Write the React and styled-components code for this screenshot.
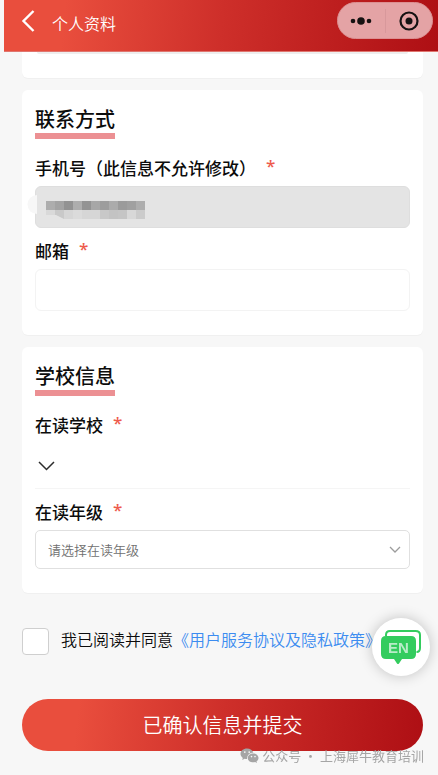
import React, { useState } from 'react'
import styled, { createGlobalStyle, css } from 'styled-components'

const GlobalStyle = createGlobalStyle`
  * {
    box-sizing: border-box;
  }
  body {
    margin: 0;
    background-color: #f7f7f7;
    color: #0c0c0c;
    font-family: "Noto Sans CJK SC", "Noto Sans", sans-serif;
  }
  button, input, select {
    font-family: inherit;
  }
`
const redGradient = css`
  background: linear-gradient(96deg, #e94e3d 14%, #ce2f2a 50%, #ae0f14 100%);
`
const Page = styled.div`
  position: relative;
  display: flex;
  flex-direction: column;
  min-height: 100vh;
`
const Header = styled.header`
  display: flex;
  align-items: flex-start;
  height: 52px;
  margin-left: 4px;
  padding: 2px 5px 0 17px;
  border-bottom: 1px solid #e0766f;
  color: white;
  ${redGradient}
`
const BackButton = styled.button`
  display: flex;
  padding: 8px 0 0;
  border: none;
  background: none;
  color: white;
  cursor: pointer;
`
const PageTitle = styled.h1`
  flex: 1;
  margin: 0 0 0 15px;
  padding-top: 9px;
  font-size: 16px;
  line-height: 24px;
  font-weight: 350;
`
const Capsule = styled.div`
  display: flex;
  align-items: center;
  width: 96px;
  height: 37px;
  border: 1px solid #dc8f91;
  border-radius: 19px;
  background-color: #e4a3a5;
`
const CapsuleButton = styled.button`
  display: flex;
  flex: 1;
  align-items: center;
  justify-content: center;
  height: 24px;
  padding: 0;
  border: none;
  background: none;
  color: #161212;
  cursor: pointer;
  & + & {
    border-left: 1px solid #d8989b;
  }
`
const Form = styled.form`
  display: flex;
  flex-direction: column;
  gap: 12px;
  padding: 0 15px 24px 22px;
`
const Card = styled.section`
  padding: 15px 13px 24px;
  border-radius: 6px;
  background-color: white;
  box-shadow: 0 1px 1px rgba(0, 0, 0, .03);
  ${props => props.$cut && css`
    padding: 0 15px 24px;
    border-radius: 0 0 6px 6px;
  `}
`
const FieldEnd = styled.div`
  height: 2px;
  border-radius: 0 0 2px 2px;
  background-color: #eeeeee;
`
const CardTitle = styled.h2`
  width: fit-content;
  margin: 0 0 17px;
  border-bottom: 6px solid #ec9093;
  font-size: 20px;
  line-height: 28px;
  font-weight: 500;
`
const Field = styled.div`
  display: flex;
  flex-direction: column;
  gap: 6px;
  & + & {
    margin-top: 11px;
  }
`
const Label = styled.label`
  display: flex;
  align-items: flex-start;
  font-size: 17px;
  line-height: 24px;
  font-weight: 500;
`
const Required = styled.span`
  margin-left: 10px;
  color: #ee5a4c;
  font-family: "Noto Sans", sans-serif;
  line-height: 20px;
`
const InputBox = styled.div`
  position: relative;
  display: flex;
`
const Input = styled.input`
  width: 100%;
  height: 42px;
  padding: 0 12px;
  border: 1px solid #f3f3f3;
  border-radius: 6px;
  background-color: white;
  font-size: 16px;
  &:disabled {
    border-color: #dedede;
    background-color: #e4e4e4;
  }
`
const Mask = styled.svg`
  position: absolute;
  top: 8px;
  left: -8px;
`
const SchoolPicker = styled.button`
  display: flex;
  align-items: center;
  height: 46px;
  padding: 0 3px;
  border: none;
  border-bottom: 1px solid #f5f5f5;
  background: none;
  color: #2c2c2c;
  cursor: pointer;
`
const Select = styled.select`
  width: 100%;
  height: 39px;
  padding: 0 36px 0 12px;
  border: 1px solid #e0e0e0;
  border-radius: 5px;
  appearance: none;
  background-color: white;
  color: #707070;
  font-size: 13px;
  font-weight: 350;
`
const SelectArrow = styled.svg`
  position: absolute;
  top: 16px;
  right: 9px;
  pointer-events: none;
  color: #9c9c9c;
`
const Agreement = styled.div`
  display: flex;
  align-items: flex-start;
  margin-top: 23px;
  font-size: 16px;
  line-height: 22px;
  font-weight: 350;
  white-space: nowrap;
`
const Checkbox = styled.input`
  flex: none;
  width: 27px;
  height: 27px;
  margin: 0 12px 0 0;
  border: 1px solid #cfcfcf;
  border-radius: 4px;
  appearance: none;
  background-color: white;
  &:checked {
    background-color: #ce2f2a;
  }
`
const PolicyLink = styled.a`
  color: #3c8cf0;
  text-decoration: none;
`
const SubmitButton = styled.button`
  height: 52px;
  margin-top: 32px;
  padding-bottom: 3px;
  border: none;
  border-radius: 26px;
  color: white;
  font-size: 20px;
  font-weight: 350;
  cursor: pointer;
  ${redGradient}
`
const LanguageButton = styled.button`
  position: fixed;
  right: 8px;
  bottom: 99px;
  display: flex;
  align-items: center;
  justify-content: center;
  width: 58px;
  height: 58px;
  padding: 0;
  border: none;
  border-radius: 50%;
  background-color: white;
  box-shadow: 0 0 14px rgba(0, 0, 0, .22);
  cursor: pointer;
`
const Account = styled.div`
  position: fixed;
  right: 14px;
  bottom: 9px;
  display: flex;
  align-items: center;
  gap: 3px;
  color: #a5a5a5;
  font-size: 13px;
  line-height: 20px;
  white-space: pre;
`

const maskCells = [
  ['#adadad', '#a3a3a3', '#929292', '#adadad', '#939393', '#a7a7a7', '#9d9d9d', '#ababab', '#9b9b9b', '#a0a0a0', '#adadad'],
  ['#d9d9d9', '#c9c9c9', '#d6d6d6', '#dbdbdb', '#d6d6d6', '#d6d6d6', '#c8c8c8', '#c3c3c3', '#c5c5c5', '#d8d8d8', '#cbcbcb'],
]

const PhoneMask = () => (
  <Mask width="120" height="26" aria-hidden="true" shapeRendering="crispEdges">
    <path d="M10 1A9 9 0 0 0 10 20Z" fill="#f7f7f7" shapeRendering="auto" />
    {maskCells.map((row, y) => row.map((fill, x) => (
      <rect key={`${x}-${y}`} x={19 + x * 9} y={7 + y * 9} width="9" height="9" fill={fill} />
    )))}
    <path d="M19 21H29L37 25H19Z" fill="#e4e4e4" shapeRendering="auto" />
  </Mask>
)

const WechatIcon = () => (
  <svg width="19" height="16" viewBox="0 0 19 16" aria-hidden="true">
    <path d="M7 0.5C3.2 0.5 0.5 2.9 0.5 5.8C0.5 7.5 1.4 8.9 2.8 9.9L2.2 12L4.6 10.8C5.4 11 6.2 11.1 7 11.1C7.2 5.8 10.6 4.6 13.4 4.7C12.7 2.2 10.1 0.5 7 0.5Z" fill="currentColor" />
    <path d="M18.5 9.9C18.5 7.5 16.1 5.5 13.2 5.5C10.2 5.5 7.8 7.5 7.8 9.9C7.8 12.4 10.2 14.3 13.2 14.3C13.8 14.3 14.5 14.2 15.1 14L17 15.1L16.5 13.3C17.7 12.5 18.5 11.3 18.5 9.9Z" fill="currentColor" />
    <g fill="#f7f7f7">
      <circle cx="4.8" cy="4.1" r="0.9" />
      <circle cx="9.2" cy="4.1" r="0.9" />
      <circle cx="11.5" cy="8.6" r="0.8" />
      <circle cx="15" cy="8.6" r="0.8" />
    </g>
  </svg>
)

const LanguageIcon = () => (
  <svg width="42" height="36" viewBox="0 0 42 36" aria-hidden="true">
    <path d="M6 7V6Q6 2 10 2H35.5Q40 2 40 6V19Q40 23 36.5 23" fill="none" stroke="#33cc5e" strokeWidth="2" />
    <path d="M6 7H31Q36 7 36 12V25Q36 30 31 30H22L19 34.5Q18 35.5 17 34.5L14 30H6Q1 30 1 25V12Q1 7 6 7Z" fill="#33cc5e" />
    <text x="18.5" y="24" textAnchor="middle" fill="#b9ecc8" fontFamily="Liberation Sans, sans-serif" fontSize="15" fontWeight="700">EN</text>
  </svg>
)

const App = () => {
  const [agreed, setAgreed] = useState(false);
  return (
    <>
      <GlobalStyle />
      <Page>
        <Header>
          <BackButton aria-label="返回">
            <svg width="16" height="22" viewBox="0 0 16 22" fill="none" stroke="currentColor" strokeWidth="2.4">
              <path d="M12.5 1L2.5 11L12.5 21" />
            </svg>
          </BackButton>
          <PageTitle>个人资料</PageTitle>
          <Capsule>
            <CapsuleButton aria-label="更多">
              <svg width="22" height="8" viewBox="0 0 22 8" fill="currentColor">
                <circle cx="3" cy="4" r="2.3" />
                <circle cx="11" cy="4" r="3.8" />
                <circle cx="19" cy="4" r="2.3" />
              </svg>
            </CapsuleButton>
            <CapsuleButton aria-label="关闭">
              <svg width="20" height="20" viewBox="0 0 20 20">
                <circle cx="10" cy="10" r="8.5" fill="none" stroke="currentColor" strokeWidth="2.2" />
                <circle cx="10" cy="10" r="3.5" fill="currentColor" />
              </svg>
            </CapsuleButton>
          </Capsule>
        </Header>
        <Form onSubmit={e => e.preventDefault()}>
          <Card $cut>
            <FieldEnd />
          </Card>
          <Card>
            <CardTitle>联系方式</CardTitle>
            <Field>
              <Label htmlFor="phone">手机号（此信息不允许修改）<Required>*</Required></Label>
              <InputBox>
                <Input id="phone" type="tel" disabled />
                <PhoneMask />
              </InputBox>
            </Field>
            <Field>
              <Label htmlFor="email">邮箱<Required>*</Required></Label>
              <Input id="email" type="email" />
            </Field>
          </Card>
          <Card>
            <CardTitle>学校信息</CardTitle>
            <Field>
              <Label htmlFor="school">在读学校<Required>*</Required></Label>
              <SchoolPicker id="school" type="button">
                <svg width="17" height="10" viewBox="0 0 17 10" fill="none" stroke="currentColor" strokeWidth="1.5">
                  <path d="M1 1L8.5 8.5L16 1" />
                </svg>
              </SchoolPicker>
            </Field>
            <Field>
              <Label htmlFor="grade">在读年级<Required>*</Required></Label>
              <InputBox>
                <Select id="grade" defaultValue="">
                  <option value="">请选择在读年级</option>
                </Select>
                <SelectArrow width="12" height="8" viewBox="0 0 12 8" fill="none" stroke="currentColor" strokeWidth="1.3">
                  <path d="M1 1L6 6L11 1" />
                </SelectArrow>
              </InputBox>
            </Field>
          </Card>
          <Agreement>
            <Checkbox id="agree" type="checkbox" checked={agreed} onChange={e => setAgreed(e.target.checked)} />
            <div>
              <label htmlFor="agree">我已阅读并同意</label>
              <PolicyLink href="#policy">《用户服务协议及隐私政策》</PolicyLink>
            </div>
          </Agreement>
          <SubmitButton type="submit">已确认信息并提交</SubmitButton>
        </Form>
        <LanguageButton aria-label="EN"><LanguageIcon /></LanguageButton>
        <Account>
          <WechatIcon />
          <span>公众号 · 上海犀牛教育培训</span>
        </Account>
      </Page>
    </>
  )
}

export default App
